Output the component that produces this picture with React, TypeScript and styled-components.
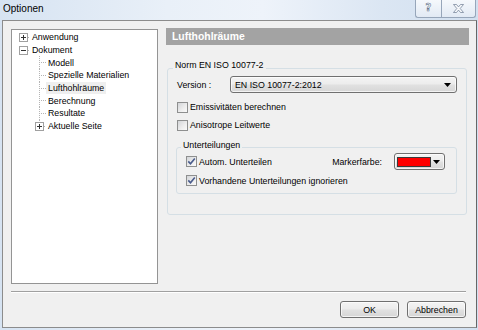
import React from 'react';
import styled, { createGlobalStyle } from 'styled-components';

const Global = createGlobalStyle`
  html, body { margin: 0; padding: 0; }
  body {
    width: 478px; height: 330px; overflow: hidden;
    background: #d8e4f2;
    font-family: "Liberation Sans", Arial, sans-serif;
    color: #000;
  }
`;

const Window = styled.div`
  width: 478px; height: 330px;
  display: flex; flex-direction: column;
  background: linear-gradient(to right, #d6e3f2 0%, #e9f0f8 35%, #eef3fa 55%, #dbe6f3 80%, #d2e0f0 100%);
`;

const TitleBar = styled.div`
  height: 20px;
  display: flex; align-items: flex-start; justify-content: space-between;
`;

const Title = styled.div`
  font-size: 10px; line-height: 10px;
  padding: 4px 0 0 3px;
`;

const CaptionButtons = styled.div`
  display: flex; margin-right: 2px;
`;

const CaptionButton = styled.div<{ $w: number; $first?: boolean }>`
  width: ${p => p.$w}px; height: 18px; box-sizing: border-box;
  border: 1px solid #97a6ba; border-top: none;
  ${p => p.$first ? 'border-right: none; border-bottom-left-radius: 3px;' : 'border-bottom-right-radius: 3px;'}
  background: linear-gradient(#f5f8fc, #e2eaf4);
  display: flex; align-items: center; justify-content: center;
`;

const HelpGlyph = styled.span`
  font-family: "DejaVu Sans", sans-serif; font-weight: bold;
  font-size: 10px; line-height: 10px;
  color: #f6f8fb;
  -webkit-text-stroke: 0.6px #6a7a90;
  margin-top: -1px;
`;

const Client = styled.div`
  margin: 0 1px 2px 2px; width: 475px; height: 308px; box-sizing: border-box;
  border: 1px solid #8c8c8c; border-right-color: #666;
  background: #f0f0f0;
  display: flex; flex-direction: column;
  padding: 7px 0 0 8px;
`;

const MainRow = styled.div`
  display: flex; align-items: flex-start; gap: 8px;
`;

const Tree = styled.div`
  margin-top: 1px;
  width: 147px; height: 255px; box-sizing: border-box;
  border: 1px solid #949494;
  background: #fff;
  padding-top: 1px;
  font-size: 8.8px;
`;

const TreeRow = styled.div`
  height: 12.7px; display: flex; align-items: center;
`;

const TreeLabel = styled.span<{ $selected?: boolean }>`
  padding: 0 2px; line-height: 12px;
  background: ${p => p.$selected ? '#efefef' : 'transparent'};
  white-space: nowrap;
`;

const RightPanel = styled.div`
  width: 303px; display: flex; flex-direction: column;
`;

const Header = styled.div`
  height: 17px; background: #a3a3a3;
  color: #fff; font-weight: bold; font-size: 10.4px;
  display: flex; align-items: center; padding-left: 6px;
`;

const Group = styled.div<{ $h: number }>`
  position: relative;
  height: ${p => p.$h}px; box-sizing: border-box;
  border: 1px solid #d5dfe5; border-radius: 3px;
  display: flex; flex-direction: column;
`;

const OuterGroup = styled(Group)`
  margin: 23px 2px 0 1px;
  padding: 7px 9px 0 8px;
`;

const InnerGroup = styled(Group)`
  margin-top: 13px;
  padding: 4px 11px 0 8px;
`;

const Legend = styled.span<{ $top: number; $left: number }>`
  position: absolute; top: ${p => p.$top}px; left: ${p => p.$left}px;
  background: #f0f0f0; padding: 0 2px;
  font-size: 8.8px; line-height: 10px;
`;

const FieldRow = styled.div`
  height: 17px; display: flex; align-items: center;
  font-size: 8.8px;
`;

const FieldLabel = styled.span`
  width: 54px; box-sizing: border-box; padding-left: 1px;
`;

const ButtonLike = styled.div`
  box-sizing: border-box; height: 17px;
  border: 1px solid #707070; border-radius: 3px;
  background: linear-gradient(#f4f4f4 0%, #ececec 48%, #e1e1e1 52%, #d6d6d6 100%);
  box-shadow: inset 0 0 0 1px rgba(255,255,255,0.7);
  display: flex; align-items: center;
  font-size: 8.8px;
`;

const Select = styled(ButtonLike)`
  width: 227px; padding: 0 5px 0 4px;
  justify-content: space-between;
`;

const CheckRow = styled.div<{ $h: number; $mt?: number }>`
  height: ${p => p.$h}px; margin-top: ${p => p.$mt ?? 0}px;
  display: flex; align-items: center;
  font-size: 8.8px; padding-left: 1px;
`;

const Box = styled.span`
  width: 11px; height: 11px; box-sizing: border-box; flex: none;
  border: 1px solid #8e8f8f;
  background: linear-gradient(135deg, #d3d5d8 0%, #eeeeee 60%, #fafafa 100%);
  display: flex; align-items: center; justify-content: center;
  margin-right: 2px;
`;

const Spacer = styled.div` flex: 1; `;

const MarkerLabel = styled.span` margin-right: 12px; `;

const ColorButton = styled(ButtonLike)`
  width: 51px; padding: 0 4px 0 2px;
  justify-content: space-between;
`;

const Swatch = styled.span`
  width: 34px; height: 10px; box-sizing: border-box;
  background: #ff0000; border: 1px solid #3a3a3a;
`;

const Separator = styled.div`
  margin-top: 7px; width: 455px;
  border-top: 1px solid #a0a0a0; border-bottom: 1px solid #fff;
`;

const ButtonRow = styled.div`
  margin-top: 8px; width: 455px;
  display: flex; justify-content: flex-end; gap: 8px;
`;

const DialogButton = styled(ButtonLike)`
  width: 59px; justify-content: center;
`;

const Arrow = () => (
  <svg width="7" height="4" viewBox="0 0 7 4"><path d="M0 0H7L3.5 4Z" fill="#000" /></svg>
);

const Check = ({ checked }: { checked?: boolean }) => (
  <Box>
    {checked && (
      <svg width="9" height="9" viewBox="0 0 9 9">
        <path d="M1.3 4.4 L3.5 6.8 L7.8 1.4" fill="none" stroke="#4a5c8c" strokeWidth="1.6" />
      </svg>
    )}
  </Box>
);

const dot = { stroke: '#b4b4b4', strokeDasharray: '1 1', strokeWidth: 1 } as const;

const Expander = ({ cx, open }: { cx: number; open?: boolean }) => (
  <g>
    <rect x={cx - 3.5} y={2.5} width={8} height={8} fill="#fff" stroke="#a0a0a0" shapeRendering="crispEdges" />
    <rect x={cx - 2} y={6} width={5} height={1} fill="#333" />
    {!open && <rect x={cx} y={4} width={1} height={5} fill="#333" />}
  </g>
);

type Kind = 'root' | 'child' | 'lastExp';

const Connector = ({ kind, open }: { kind: Kind; open?: boolean }) => {
  if (kind === 'root') {
    return (
      <svg width="18" height="12.7" viewBox="0 0 18 12.7" shapeRendering="crispEdges">
        <line x1="16" y1="6.5" x2="18" y2="6.5" {...dot} />
        <Expander cx={11} open={open} />
      </svg>
    );
  }
  if (kind === 'child') {
    return (
      <svg width="34" height="12.7" viewBox="0 0 34 12.7" shapeRendering="crispEdges">
        <line x1="27.5" y1="0" x2="27.5" y2="12.7" {...dot} />
        <line x1="29" y1="6.5" x2="34" y2="6.5" {...dot} />
      </svg>
    );
  }
  return (
    <svg width="34" height="12.7" viewBox="0 0 34 12.7" shapeRendering="crispEdges">
      <line x1="27.5" y1="0" x2="27.5" y2="2" {...dot} />
      <line x1="32" y1="6.5" x2="34" y2="6.5" {...dot} />
      <Expander cx={27} />
    </svg>
  );
};

const treeItems: { label: string; kind: Kind; open?: boolean; selected?: boolean }[] = [
  { label: 'Anwendung', kind: 'root' },
  { label: 'Dokument', kind: 'root', open: true },
  { label: 'Modell', kind: 'child' },
  { label: 'Spezielle Materialien', kind: 'child' },
  { label: 'Lufthohlräume', kind: 'child', selected: true },
  { label: 'Berechnung', kind: 'child' },
  { label: 'Resultate', kind: 'child' },
  { label: 'Aktuelle Seite', kind: 'lastExp' },
];

export default function App() {
  return (
    <>
      <Global />
      <Window>
        <TitleBar>
          <Title>Optionen</Title>
          <CaptionButtons>
            <CaptionButton $w={26} $first>
              <HelpGlyph>?</HelpGlyph>
            </CaptionButton>
            <CaptionButton $w={35}>
              <svg width="11" height="9" viewBox="0 0 11 9">
                <path d="M0.5 0.5H3.5L5.5 2.9L7.5 0.5H10.5L7.2 4.5L10.5 8.5H7.5L5.5 6.1L3.5 8.5H0.5L3.8 4.5Z"
                  fill="#f6f8fb" stroke="#6a7a90" strokeWidth="0.7" />
              </svg>
            </CaptionButton>
          </CaptionButtons>
        </TitleBar>
        <Client>
          <MainRow>
            <Tree>
              {treeItems.map(it => (
                <TreeRow key={it.label}>
                  <Connector kind={it.kind} open={it.open} />
                  <TreeLabel $selected={it.selected}>{it.label}</TreeLabel>
                </TreeRow>
              ))}
            </Tree>
            <RightPanel>
              <Header>Lufthohlräume</Header>
              <OuterGroup $h={147}>
                <Legend $top={-9} $left={5}>Norm EN ISO 10077-2</Legend>
                <FieldRow>
                  <FieldLabel>Version :</FieldLabel>
                  <Select>
                    <span>EN ISO 10077-2:2012</span>
                    <Arrow />
                  </Select>
                </FieldRow>
                <CheckRow $h={18} $mt={5}>
                  <Check />
                  <span>Emissivitäten berechnen</span>
                </CheckRow>
                <CheckRow $h={18}>
                  <Check />
                  <span>Anisotrope Leitwerte</span>
                </CheckRow>
                <InnerGroup $h={47}>
                  <Legend $top={-8} $left={4}>Unterteilungen</Legend>
                  <CheckRow $h={19}>
                    <Check checked />
                    <span>Autom. Unterteilen</span>
                    <Spacer />
                    <MarkerLabel>Markerfarbe:</MarkerLabel>
                    <ColorButton>
                      <Swatch />
                      <Arrow />
                    </ColorButton>
                  </CheckRow>
                  <CheckRow $h={19}>
                    <Check checked />
                    <span>Vorhandene Unterteilungen ignorieren</span>
                  </CheckRow>
                </InnerGroup>
              </OuterGroup>
            </RightPanel>
          </MainRow>
          <Separator />
          <ButtonRow>
            <DialogButton>OK</DialogButton>
            <DialogButton>Abbrechen</DialogButton>
          </ButtonRow>
        </Client>
      </Window>
    </>
  );
}
